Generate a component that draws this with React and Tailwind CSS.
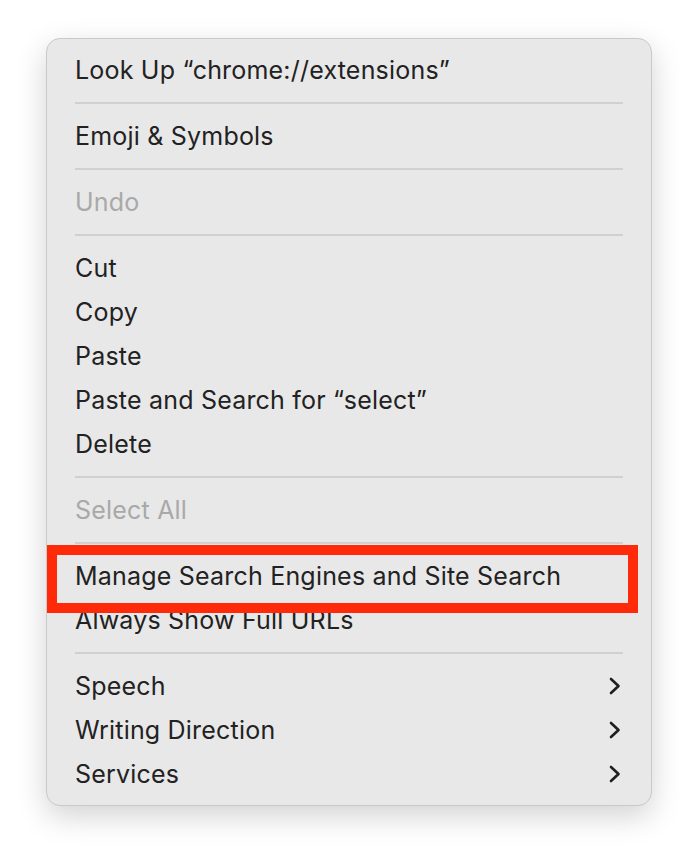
import React from 'react';

const groups = [
  [{ label: 'Look Up “chrome://extensions”' }],
  [{ label: 'Emoji & Symbols' }],
  [{ label: 'Undo', disabled: true }],
  [
    { label: 'Cut' },
    { label: 'Copy' },
    { label: 'Paste' },
    { label: 'Paste and Search for “select”' },
    { label: 'Delete' },
  ],
  [{ label: 'Select All', disabled: true }],
  [
    { label: 'Manage Search Engines and Site Search', boxed: true },
    { label: 'Always Show Full URLs' },
  ],
  [
    { label: 'Speech', sub: true },
    { label: 'Writing Direction', sub: true },
    { label: 'Services', sub: true },
  ],
];

function Chevron() {
  return (
    <svg width="14" height="20" viewBox="0 0 14 20" className="text-[#1f1f1f]">
      <path d="M3 3l7.5 7L3 17" fill="none" stroke="currentColor" strokeWidth="2.6" strokeLinecap="round" strokeLinejoin="round" />
    </svg>
  );
}

function Item({ item }) {
  return (
    <div className="relative h-[44px] pl-[28px] pr-[29px] flex items-center justify-between">
      <span className={item.disabled ? 'text-[#a9a9a9]' : 'text-[#222222]'}>{item.label}</span>
      {item.sub && <Chevron />}
      {/* annotation box drawn over the menu */}
      {item.boxed && (
        <div className="absolute z-10 left-0 right-[13px] top-[-9px] bottom-[-15px] border-[10px] border-[#ff2a0a]" />
      )}
    </div>
  );
}

export default function App() {
  return (
    <div className="w-[698px] h-[860px] bg-white pt-[38px] pl-[46px]" style={{ fontFamily: 'Inter, "Liberation Sans", sans-serif' }}>
      <div className="w-[606px] bg-[#e8e8e8] rounded-[14px] border border-[#c9c9c9] shadow-[0_10px_30px_rgba(0,0,0,0.18)] py-[9px] text-[25px] tracking-[0.2px] leading-none">
        {groups.map((g, gi) => (
          <div key={gi}>
            {gi > 0 && (
              <div className="h-[22px] flex items-center px-[28px]">
                <div className="h-[2px] w-full bg-[#d0d0d0]" />
              </div>
            )}
            {g.map((item) => (
              <Item key={item.label} item={item} />
            ))}
          </div>
        ))}
      </div>
    </div>
  );
}
